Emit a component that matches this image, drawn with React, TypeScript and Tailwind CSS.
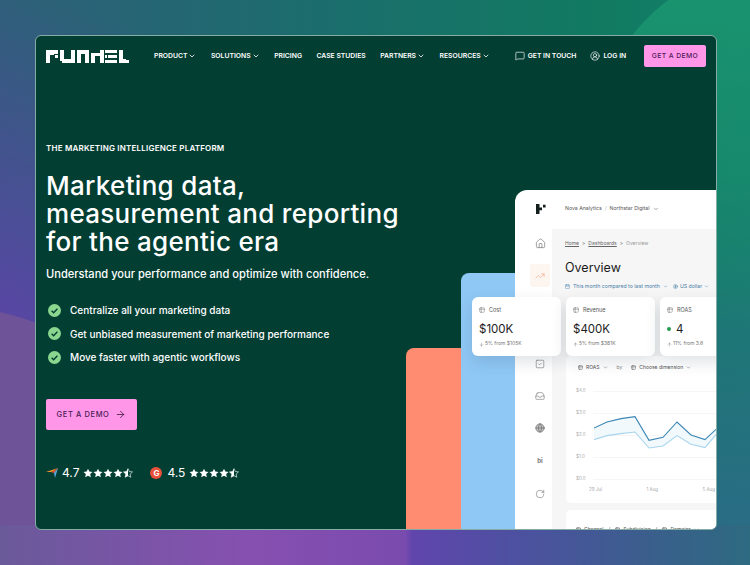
import { ArrowRight, ChevronDown, CircleUserRound, Home, MessageSquare, RotateCw, SquareCheck, Inbox, Globe, TrendingUp, Table2, ArrowDown, ArrowUp, Calendar, CircleDollarSign } from 'lucide-react';

const navItems = [
    { label: 'Product', menu: true },
    { label: 'Solutions', menu: true },
    { label: 'Pricing', menu: false },
    { label: 'Case studies', menu: false },
    { label: 'Partners', menu: true },
    { label: 'Resources', menu: true },
];

const bullets = [
    'Centralize all your marketing data',
    'Get unbiased measurement of marketing performance',
    'Move faster with agentic workflows',
];

const Logo = () => (
    <svg width="83" height="13" viewBox="0 0 83 13" fill="#fff" className="shrink-0">
        {/* F */}
        <path d="M0 0h12v4H8v1H4v8H0zM9 5h3v3H9z" />
        {/* U */}
        <path d="M14 0h4v9h7V0h4v13H16v-2h-2z" />
        {/* N */}
        <path d="M31 0h12v13h-4V4h-4v9h-4z" />
        {/* N */}
        <path d="M45 3h9V0h4v13h-4V6h-5v7h-4z" />
        {/* E */}
        <path d="M59 0h12v3H59zM62 5h9v3h-9zM59 5h2v3h-2zM59 10h12v3H59z" />
        {/* L */}
        <path d="M73 0h4v9h3v1h3v3H73z" />
    </svg>
);

const CheckBadge = () => (
    <svg width="13" height="13" viewBox="0 0 13 13">
        <circle cx="6.5" cy="6.5" r="6.5" fill="#8ad68f" />
        <path d="M3.6 6.7l2 2 3.8-4" fill="none" stroke="#033e33" strokeWidth="1.4" />
    </svg>
);

const Star = ({ half = false }: { half?: boolean }) => (
    <svg width="10" height="10" viewBox="0 0 24 24">
        <path
            d="M12 1.5l3.2 7 7.6.9-5.6 5.2 1.5 7.6L12 18.4l-6.7 3.8 1.5-7.6L1.2 9.4l7.6-.9z"
            fill={half ? 'none' : '#fff'}
            stroke="#fff"
            strokeWidth={half ? 1.5 : 0}
        />
        {half && <path d="M12 1.5v16.9l-6.7 3.8 1.5-7.6L1.2 9.4l7.6-.9z" fill="#fff" />}
    </svg>
);

const Stars = () => (
    <div className="flex">
        <Star />
        <Star />
        <Star />
        <Star />
        <Star half />
    </div>
);

const Kpi = ({ name, value, delta, dot, up }: { name: string; value: string; delta: string; dot?: boolean; up?: boolean }) => (
    <div className="w-[89px] h-[59px] shrink-0 bg-white rounded-[6px] shadow-[0_6px_16px_rgba(30,50,70,0.14)] pl-[7px] pt-[9px]">
        <div className="flex items-center gap-[4px] text-[5.5px] text-[#555]">
            <Table2 size={6} strokeWidth={1.5} />
            {name}
        </div>
        <div className="flex items-center gap-[5px] mt-[8px] text-[11.5px] leading-[14px] text-[#1b1b1b]">
            {dot && <span className="w-[4px] h-[4px] rounded-full bg-[#1f9d4d]" />}
            {value}
        </div>
        <div className="flex items-center gap-[1px] mt-[4px] text-[5px] text-[#777]">
            {up ? <ArrowUp size={5} /> : <ArrowDown size={5} />}
            {delta}
        </div>
    </div>
);

const darkLine = '0,32 13,26 27,22.6 41,20.6 55,44.3 69,41.3 83,26 97,39 111,43.6 122,33.3';
const lightLine = '0,43.6 13,39.6 27,37.6 41,36 55,52 69,50 83,39.6 97,48.3 111,51.6 122,38.6';
const bandBack = '122,38.6 111,51.6 97,48.3 83,39.6 69,50 55,52 41,36 27,37.6 13,39.6 0,43.6';

const Chart = () => (
    <div className="relative h-[120px] mt-[9px] text-[4.5px] text-[#aaa]">
        {['$4.0', '$3.0', '$2.0', '$1.0', '$0.0'].map((tick) => (
            <div key={tick} className="flex items-center gap-[5px] h-[22px]">
                <span className="w-[12px]">{tick}</span>
                <div className="flex-1 border-t border-[#f6f6f6]" />
            </div>
        ))}
        <svg className="absolute left-[18px] top-[16px]" width="122" height="70" viewBox="0 0 122 70" fill="none">
            <polygon points={`${darkLine} ${bandBack}`} fill="#f1f9fd" />
            <polyline points={lightLine} stroke="#a8d4ee" strokeWidth="1.1" />
            <polyline points={darkLine} stroke="#3c86b4" strokeWidth="1.1" />
        </svg>
        <div className="absolute left-[13px] top-[107px] flex w-[126px] justify-between">
            <span>29 Jul</span>
            <span>1 Aug</span>
            <span>5 Aug</span>
        </div>
    </div>
);

const Dashboard = () => (
    <div className="w-[202px] h-[339px] shrink-0 bg-white rounded-tl-[12px] flex flex-col">
        <div className="h-[39px] shrink-0 flex items-center pl-[21px] pb-[1px] text-[5.2px] text-[#555] whitespace-nowrap">
            <svg width="10" height="10" viewBox="0 0 10 10" fill="#15201e" className="mr-[19px]">
                <path d="M0 0h3.5v10H0zM3.5 3.6H6v2.6H3.5zM7 0.8h2.6v2.6H7z" />
            </svg>
            Nova Analytics
            <span className="mx-[3px] text-[#bbb]">/</span>
            Northstar Digital
            <ChevronDown size={6} className="ml-[4px]" />
        </div>
        <div className="flex flex-1 min-h-0">
            <div className="w-[37px] shrink-0 flex flex-col items-center pl-[13px] pt-[9px] text-[#666]">
                <Home size={11} strokeWidth={1.3} />
                <div className="mt-[15px] w-[20px] h-[23px] bg-[#fdf5f0] rounded-[3px] flex items-center justify-center">
                    <TrendingUp size={10} strokeWidth={1.2} className="text-[#f0906f]" />
                </div>
                <SquareCheck size={10} strokeWidth={1.3} className="mt-[72px]" />
                <Inbox size={10} strokeWidth={1.3} className="mt-[22px]" />
                <Globe size={10} strokeWidth={1.6} className="mt-[22px] fill-[#c4c4c4]" />
                <span className="mt-[23px] text-[6px] font-bold leading-[10px] text-[#777]">bi</span>
                <RotateCw size={10} strokeWidth={1.3} className="mt-[23px]" />
            </div>
            <div className="flex-1 min-w-0 bg-[#f6f6f6] pl-[13px]">
                <div className="flex items-center gap-[3px] mt-[10px] text-[5px] leading-[8px] text-[#666]">
                    <span className="underline">Home</span>
                    <span>&gt;</span>
                    <span className="underline">Dashboards</span>
                    <span>&gt;</span>
                    <span className="text-[#999]">Overview</span>
                </div>
                <div className="mt-[13px] text-[12.5px] leading-[15px] text-[#1b1b1b]">Overview</div>
                <div className="flex items-center mt-[7px] text-[5.2px] leading-[8px] text-[#4a7fa8] whitespace-nowrap">
                    <Calendar size={5} className="mr-[3px]" />
                    This month compared to last month
                    <ChevronDown size={5} className="ml-[3px] mr-[5px]" />
                    <CircleDollarSign size={5} className="mr-[2px]" />
                    US dollar
                    <ChevronDown size={5} className="ml-[2px]" />
                </div>
                <div className="relative z-10 flex gap-[5px] mt-[7px] -ml-[93px]">
                    <Kpi name="Cost" value="$100K" delta="5% from $105K" />
                    <Kpi name="Revenue" value="$400K" delta="5% from $381K" up />
                    <Kpi name="ROAS" value="4" delta="11% from 3.6" dot up />
                </div>
                <div className="ml-[1px] bg-white rounded-l-[5px] h-[147px] pl-[10px] pt-[7px]">
                    <div className="flex items-center text-[5px] leading-[8px] text-[#555] gap-[3px] ml-[2px]">
                        <Table2 size={5} />
                        ROAS
                        <ChevronDown size={5} />
                        <span className="mx-[6px] text-[#888]">by</span>
                        <Table2 size={5} />
                        Choose dimension
                        <ChevronDown size={5} />
                    </div>
                    <Chart />
                </div>
                <div className="ml-[1px] mt-[7px] bg-white rounded-l-[5px] h-[30px] pl-[10px] pt-[15px]">
                    <div className="flex items-center gap-[3px] text-[5px] leading-[8px] text-[#555] whitespace-nowrap">
                        <Table2 size={5} />
                        Channel
                        <span className="mx-[2px]">/</span>
                        <Table2 size={5} />
                        Subdivision
                        <span className="mx-[2px]">/</span>
                        <Table2 size={5} />
                        Domains
                        <ChevronDown size={5} />
                    </div>
                </div>
            </div>
        </div>
    </div>
);

export default function App() {
    return (
        <div className="relative w-[750px] h-[565px] overflow-hidden bg-[linear-gradient(90deg,#2f5f7a_0%,#1a6e6c_45%,#117a61_80%,#14806a_100%)] font-['Inter',sans-serif]">
            {/* Backdrop shapes */}
            <div className="absolute inset-0 bg-[linear-gradient(180deg,transparent_30%,#2c6a88_100%)]" />
            <div className="absolute left-[593px] top-[-37px] w-[374px] h-[374px] rounded-full bg-gradient-to-b from-[#1a9570] to-transparent" />
            <div className="absolute inset-0 bg-[radial-gradient(ellipse_340px_330px_at_0px_330px,#5a45a5_0%,transparent_100%)]" />
            <div className="absolute left-[-520px] top-[300px] w-[840px] h-[840px] rounded-full bg-[#6f5399]" />
            <div className="absolute inset-x-0 top-[525px] bottom-0 bg-[linear-gradient(90deg,#6a5a9a_0%,#8650b0_33%,#7a4bae_54%,#6045ac_55%,#4f4fa2_67%,#3a5f8c_87%,#2d6a80_100%)]" />

            {/* Browser card */}
            <div className="absolute left-[35px] top-[35px] w-[682px] h-[495px] rounded-[6px] border border-[#86aca6] bg-[#033e33] overflow-hidden">
                <header className="flex items-center h-[39px] pt-[1px] pl-[10px] pr-[10px] text-[6.8px] font-semibold uppercase text-white whitespace-nowrap">
                    <Logo />
                    <nav className="flex items-center gap-[14.5px] ml-[25px]">
                        {navItems.map((item) => (
                            <span key={item.label} className="flex items-center gap-[1px]">
                                {item.label}
                                {item.menu && <ChevronDown size={8} strokeWidth={2.4} />}
                            </span>
                        ))}
                    </nav>
                    <span className="flex items-center gap-[3px] ml-[25px]">
                        <MessageSquare size={10} strokeWidth={1.6} />
                        Get in touch
                    </span>
                    <span className="flex items-center gap-[3px] ml-[14px]">
                        <CircleUserRound size={10} strokeWidth={1.6} />
                        Log in
                    </span>
                    <span className="ml-auto flex items-center justify-center w-[62px] h-[22px] rounded-[2px] bg-[#ff96e8] text-[#4a1c56] font-medium tracking-[0.4px]">
                        Get a demo
                    </span>
                </header>

                <main className="pl-[10px] text-white">
                    <p className="mt-[67px] text-[8px] leading-[12px] font-semibold uppercase tracking-[0.2px]">The marketing intelligence platform</p>
                    <h1 className="mt-[18px] text-[26px] leading-[28px] font-medium tracking-[0.3px]">
                        Marketing data,
                        <br />
                        measurement and reporting
                        <br />
                        for the agentic era
                    </h1>
                    <p className="mt-[9px] text-[11.1px] leading-[18px] font-medium">Understand your performance and optimize with confidence.</p>
                    <ul className="mt-[19px] flex flex-col gap-[7.5px]">
                        {bullets.map((text) => (
                            <li key={text} className="flex items-center gap-[9px] text-[10px] leading-[16px] font-medium">
                                <span className="ml-[2px]">
                                    <CheckBadge />
                                </span>
                                {text}
                            </li>
                        ))}
                    </ul>
                    <a className="mt-[34px] flex items-center justify-center gap-[6px] w-[91px] h-[31px] rounded-[2px] bg-[#ff96e8] text-[#4a1c56] text-[7.5px] font-medium uppercase tracking-[0.6px]">
                        Get a demo
                        <ArrowRight size={11} strokeWidth={1.6} className="text-[#2a1030]" />
                    </a>
                    <div className="mt-[34px] flex items-center text-[12px] leading-[18px]">
                        <svg width="12" height="12" viewBox="0 0 12 12" className="mr-[4px]">
                            <path d="M0 5l12-4-7 4z" fill="#ff9d28" />
                            <path d="M12 1L5 5l3 1z" fill="#e4572e" />
                            <path d="M12 1L8 6l1 5z" fill="#5aa7e0" />
                        </svg>
                        <span className="mr-[4px]">4.7</span>
                        <Stars />
                        <span className="ml-[17px] mr-[5px] w-[12px] h-[12px] rounded-full bg-[#e8503a] text-[8px] leading-[12px] font-bold text-center">G</span>
                        <span className="mr-[4px]">4.5</span>
                        <Stars />
                    </div>
                </main>

                {/* Product visual */}
                <div className="absolute left-[370px] bottom-0 flex items-end">
                    <div className="w-[55px] h-[181px] bg-[#ff8c70] rounded-tl-[8px]" />
                    <div className="w-[54px] h-[256px] bg-[#8fc8f5] rounded-tl-[8px]" />
                    <Dashboard />
                </div>
            </div>
        </div>
    );
}
